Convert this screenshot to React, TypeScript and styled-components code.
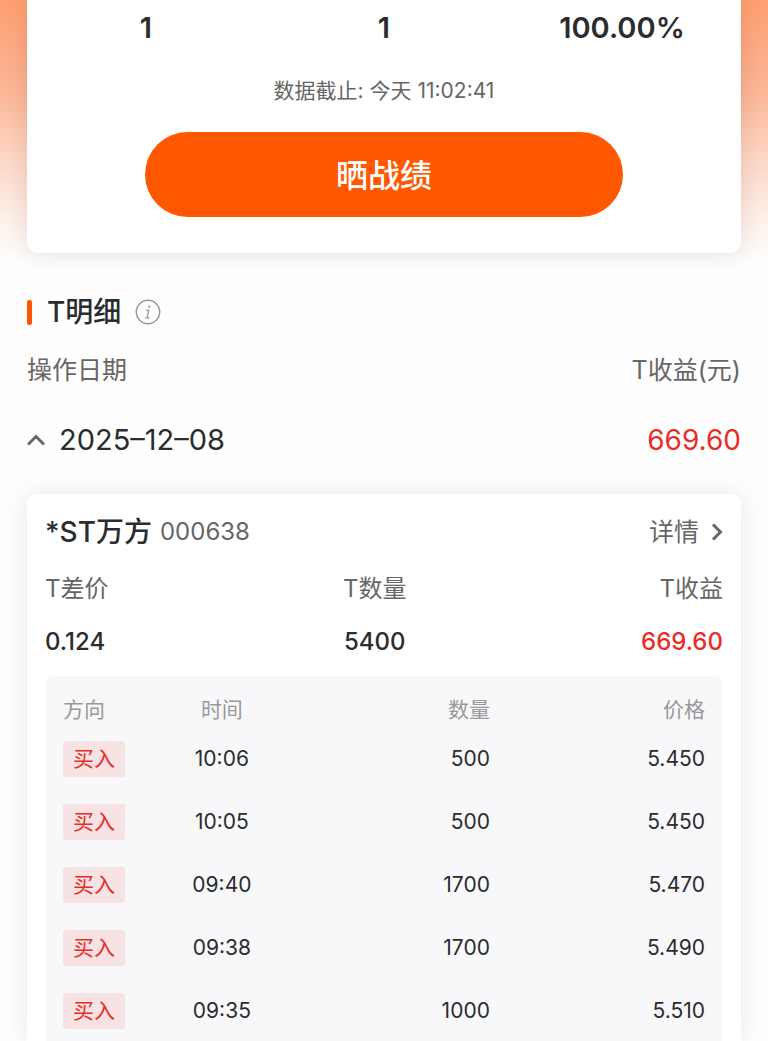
import React from "react";
import styled, { createGlobalStyle } from "styled-components";

const color = {
  brand: "#ff5800",
  ink: "#2b2c2e",
  muted: "#666666",
  faint: "#999999",
  rise: "#e92c28",
};

const GlobalStyle = createGlobalStyle`
  * { box-sizing: border-box; }
  body {
    margin: 0;
    background: #fefefe;
    color: ${color.ink};
    font-family: Inter, "Noto Sans CJK SC", sans-serif;
    -webkit-font-smoothing: antialiased;
  }
  button, h2, h3, p, dl, dt, dd { margin: 0; padding: 0; font: inherit; }
  button { border: 0; background: none; color: inherit; cursor: pointer; }
`;

const Page = styled.main`
  display: flex;
  flex-direction: column;
  min-height: 100vh;
  padding: 0 27px;
  overflow: hidden;
  background: linear-gradient(#ff9f70 0, #fdb595 90px, #fdd8c6 160px, #fef3ee 225px, #fefefe 265px);
`;

const SummaryCard = styled.section`
  display: flex;
  flex-direction: column;
  align-items: center;
  padding-bottom: 36px;
  border-radius: 0 0 10px 10px;
  background: #fff;
  box-shadow: 0 0 24px rgba(60, 20, 10, 0.12);
`;

const Stats = styled.div`
  display: grid;
  grid-template-columns: repeat(3, 1fr);
  width: 100%;
  font-size: 29px;
  font-weight: 600;
  line-height: 56px;
  text-align: center;
`;

const Timestamp = styled.p`
  && {
    margin-top: 20px;
    color: ${color.muted};
    font-size: 21px;
    line-height: 30px;
  }
`;

const ShareButton = styled.button`
  && {
    width: 67%;
    height: 85px;
    margin-top: 26px;
    padding-bottom: 4px;
    border-radius: 43px;
    background: ${color.brand};
    color: #fff;
    font-size: 32px;
    font-weight: 500;
  }
`;

const SectionHeader = styled.header`
  display: flex;
  align-items: center;
  margin-top: 41px;
`;

const Marker = styled.span`
  width: 5px;
  height: 25px;
  margin-right: 15px;
  border-radius: 2px;
  background: ${color.brand};
`;

const SectionTitle = styled.h2`
  && {
    font-size: 28px;
    font-weight: 500;
    line-height: 36px;
  }
`;

const InfoButton = styled.button`
  && {
    display: flex;
    margin-left: 14px;
    color: ${color.faint};
  }
`;

const Labels = styled.div`
  display: flex;
  justify-content: space-between;
  margin-top: 22px;
  color: ${color.muted};
  font-size: 25px;
  line-height: 36px;
`;

const DateRow = styled.button`
  && {
    display: flex;
    align-items: center;
    margin-top: 32px;
    font-size: 29px;
    line-height: 40px;
  }
  svg { margin-right: 13px; color: ${color.muted}; }
`;

const DateProfit = styled.span`
  margin-left: auto;
  color: ${color.rise};
  font-size: 28px;
`;

const StockCard = styled.section`
  display: flex;
  flex: 1;
  flex-direction: column;
  margin-top: 34px;
  padding: 20px 18px 0;
  border-radius: 10px 10px 0 0;
  background: #fff;
  box-shadow: 0 0 24px rgba(0, 0, 0, 0.1);
`;

const StockHeader = styled.header`
  display: flex;
  align-items: center;
  line-height: 36px;
`;

const StockName = styled.h3`
  && {
    font-size: 28px;
    font-weight: 500;
  }
`;

const StockCode = styled.span`
  margin-left: 8px;
  color: ${color.muted};
  font-size: 24px;
`;

const DetailLink = styled.a`
  display: flex;
  align-items: center;
  margin-left: auto;
  color: ${color.muted};
  font-size: 25px;
  text-decoration: none;
  svg { margin-left: 12px; }
`;

const Figures = styled.dl`
  && {
    display: flex;
    justify-content: space-between;
    margin-top: 23px;
    font-size: 24px;
    line-height: 32px;
  }
`;

const Figure = styled.div<{ $align?: "center" | "right" }>`
  text-align: ${(p) => p.$align ?? "left"};
`;

const FigureLabel = styled.dt`
  color: ${color.muted};
`;

const FigureValue = styled.dd<{ $rise?: boolean }>`
  && {
    margin-top: 21px;
    color: ${(p) => (p.$rise ? color.rise : color.ink)};
    font-weight: 500;
  }
`;

const TradePanel = styled.div`
  flex: 1;
  margin-top: 18px;
  padding: 16px 18px 0;
  border-radius: 10px 10px 0 0;
  background: #f8f8fa;
`;

const TradeTable = styled.table`
  width: 100%;
  border-collapse: collapse;
  table-layout: fixed;
  font-size: 21px;
  line-height: 36px;
`;

const HeadCell = styled.th<{ $align: string; $width: string }>`
  width: ${(p) => p.$width};
  padding: 0 0 13px;
  color: ${color.faint};
  font-weight: 400;
  text-align: ${(p) => p.$align};
`;

const Cell = styled.td<{ $align: string }>`
  padding: 0;
  text-align: ${(p) => p.$align};
  tr + tr > & { padding-top: 27px; }
`;

const SideTag = styled.span`
  display: block;
  width: 62px;
  border-radius: 3px;
  background: #f7e2e4;
  color: ${color.rise};
  text-align: center;
`;

const columns = [
  { label: "方向", align: "left", width: "14%" },
  { label: "时间", align: "center", width: "21.5%" },
  { label: "数量", align: "right", width: "31%" },
  { label: "价格", align: "right", width: "33.5%" },
];

const trades = [
  { time: "10:06", amount: "500", price: "5.450" },
  { time: "10:05", amount: "500", price: "5.450" },
  { time: "09:40", amount: "1700", price: "5.470" },
  { time: "09:38", amount: "1700", price: "5.490" },
  { time: "09:35", amount: "1000", price: "5.510" },
];

const InfoIcon = () => (
  <svg width="26" height="26" viewBox="0 0 26 26" fill="none" stroke="currentColor" aria-hidden="true">
    <circle cx="13" cy="13" r="11.7" strokeWidth="1.5" />
    <circle cx="14.2" cy="7.7" r="1.1" fill="currentColor" stroke="none" />
    <path d="M10.8 11.4h2.9l-1.5 7.2M10 18.8h4.6" strokeWidth="1.3" />
  </svg>
);

const ChevronUp = () => (
  <svg width="19" height="14" viewBox="0 0 19 14" fill="none" stroke="currentColor" strokeWidth="3" aria-hidden="true">
    <path d="M1 11.5 9 3.500 17 11.5" />
  </svg>
);

const ChevronRight = () => (
  <svg width="12" height="18" viewBox="0 0 12 18" fill="none" stroke="currentColor" strokeWidth="3" aria-hidden="true">
    <path d="M2 1.5 9.5 9 2 16.5" />
  </svg>
);

export default function App() {
  return (
    <>
      <GlobalStyle />
      <Page>
        <SummaryCard>
          <Stats>
            <span>1</span>
            <span>1</span>
            <span>100.00%</span>
          </Stats>
          <Timestamp>数据截止: 今天 11:02:41</Timestamp>
          <ShareButton type="button">晒战绩</ShareButton>
        </SummaryCard>

        <SectionHeader>
          <Marker />
          <SectionTitle>T明细</SectionTitle>
          <InfoButton type="button" aria-label="说明">
            <InfoIcon />
          </InfoButton>
        </SectionHeader>
        <Labels>
          <span>操作日期</span>
          <span>T收益(元)</span>
        </Labels>
        <DateRow type="button" aria-expanded="true">
          <ChevronUp />
          <span>2025–12–08</span>
          <DateProfit>669.60</DateProfit>
        </DateRow>

        <StockCard>
          <StockHeader>
            <StockName>*ST万方</StockName>
            <StockCode>000638</StockCode>
            <DetailLink href="#detail">
              详情
              <ChevronRight />
            </DetailLink>
          </StockHeader>
          <Figures>
            <Figure>
              <FigureLabel>T差价</FigureLabel>
              <FigureValue>0.124</FigureValue>
            </Figure>
            <Figure $align="center">
              <FigureLabel>T数量</FigureLabel>
              <FigureValue>5400</FigureValue>
            </Figure>
            <Figure $align="right">
              <FigureLabel>T收益</FigureLabel>
              <FigureValue $rise>669.60</FigureValue>
            </Figure>
          </Figures>
          <TradePanel>
            <TradeTable>
              <thead>
                <tr>
                  {columns.map((c) => (
                    <HeadCell key={c.label} scope="col" $align={c.align} $width={c.width}>
                      {c.label}
                    </HeadCell>
                  ))}
                </tr>
              </thead>
              <tbody>
                {trades.map((t) => (
                  <tr key={t.time}>
                    <Cell $align="left">
                      <SideTag>买入</SideTag>
                    </Cell>
                    <Cell $align="center">{t.time}</Cell>
                    <Cell $align="right">{t.amount}</Cell>
                    <Cell $align="right">{t.price}</Cell>
                  </tr>
                ))}
              </tbody>
            </TradeTable>
          </TradePanel>
        </StockCard>
      </Page>
    </>
  );
}
